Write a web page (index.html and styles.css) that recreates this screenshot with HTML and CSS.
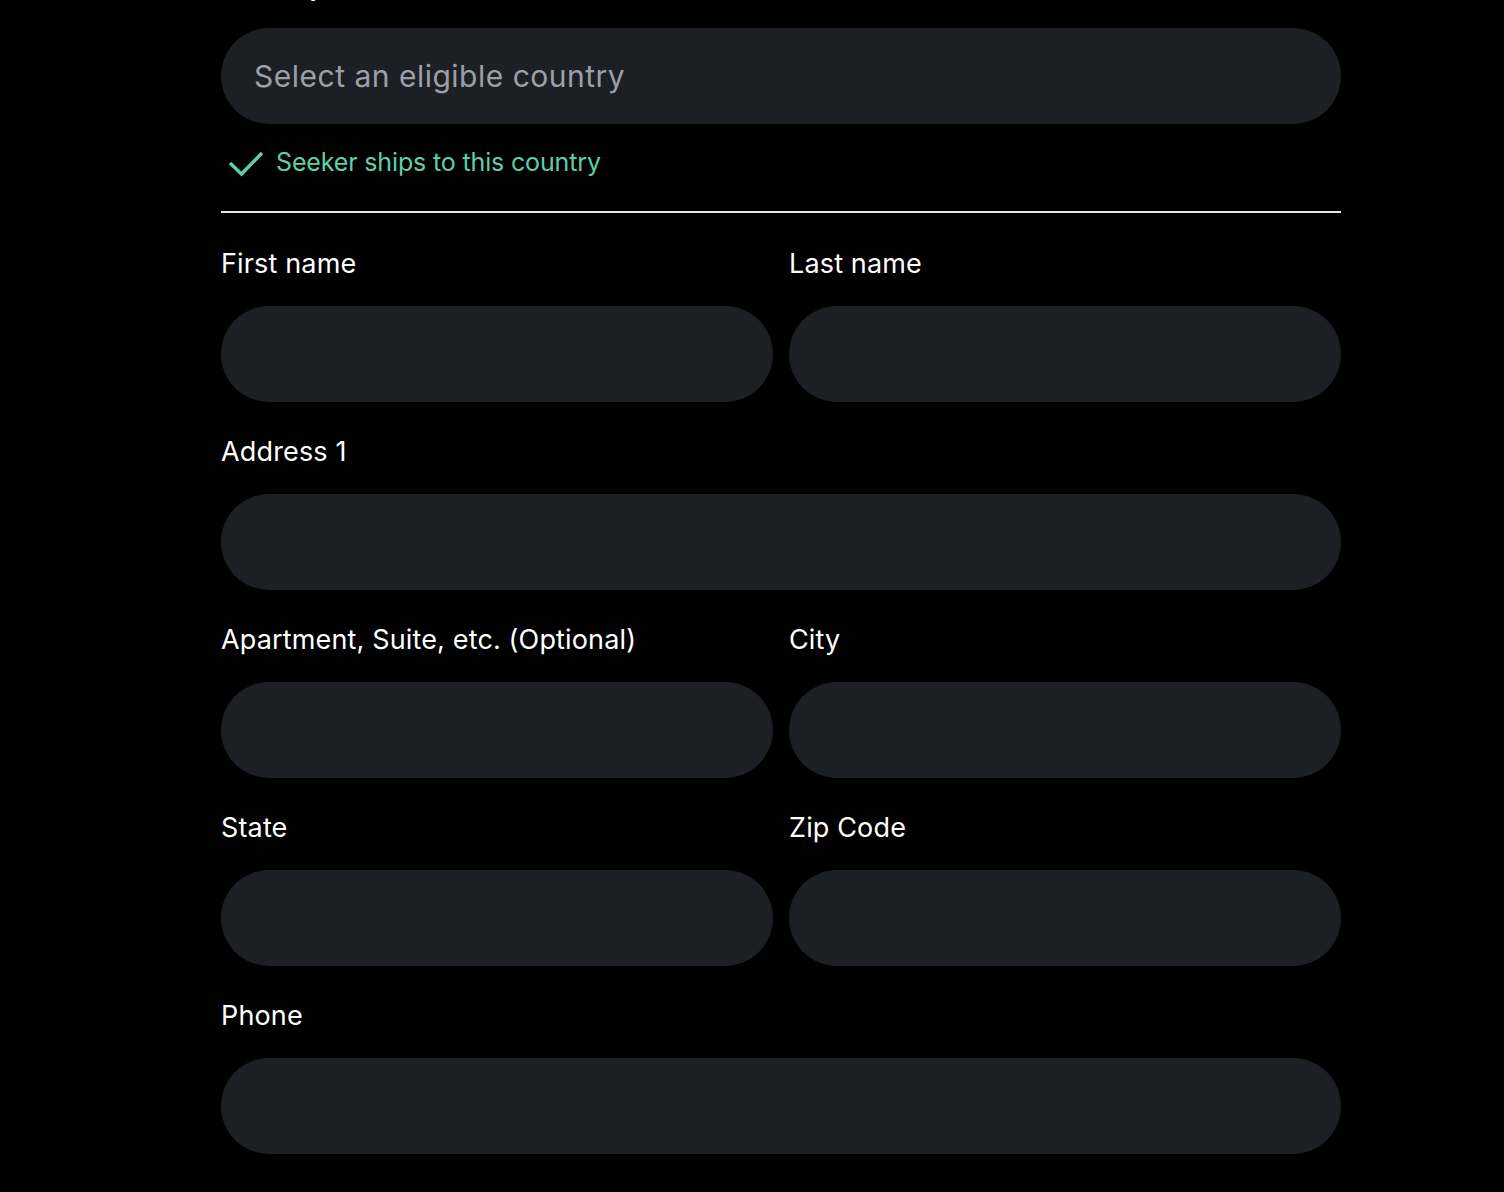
FILE: index.html
```html
<!DOCTYPE html>
<html lang="en">
<head>
<meta charset="utf-8">
<title>Shipping address</title>
<link rel="stylesheet" href="styles.css">
</head>
<body>
<form class="form">
  <div class="field">
    <label class="label">Country</label>
    <div class="input select"><span class="placeholder">Select an eligible country</span></div>
  </div>
  <div class="notice">
    <svg class="check" width="36" height="28" viewBox="0 0 36 28" aria-hidden="true">
      <path d="M2 14 L13.5 25 L34 4" fill="none" stroke="#5fcfa8" stroke-width="3.4" stroke-linecap="butt" stroke-linejoin="miter"/>
    </svg>
    <span class="notice-text">Seeker ships to this country</span>
  </div>
  <hr class="divider">
  <div class="grid">
    <div class="field">
      <label class="label">First name</label>
      <div class="input"></div>
    </div>
    <div class="field">
      <label class="label">Last name</label>
      <div class="input"></div>
    </div>
    <div class="field span">
      <label class="label">Address 1</label>
      <div class="input"></div>
    </div>
    <div class="field">
      <label class="label">Apartment, Suite, etc. (Optional)</label>
      <div class="input"></div>
    </div>
    <div class="field">
      <label class="label">City</label>
      <div class="input"></div>
    </div>
    <div class="field">
      <label class="label">State</label>
      <div class="input"></div>
    </div>
    <div class="field">
      <label class="label">Zip Code</label>
      <div class="input"></div>
    </div>
    <div class="field span">
      <label class="label">Phone</label>
      <div class="input"></div>
    </div>
  </div>
</form>
</body>
</html>
```
FILE: styles.css
```css
html, body {
  margin: 0;
  padding: 0;
  background: #000;
  height: 100%;
  overflow: hidden;
}
body {
  font-family: Inter, "Liberation Sans", sans-serif;
  color: #fff;
}
.form {
  width: 1120px;
  margin: -32px 0 0 221px;
  display: flex;
  flex-direction: column;
}
.field {
  display: flex;
  flex-direction: column;
}
.label {
  font-size: 27px;
  line-height: 36px;
  color: #fff;
  margin-bottom: 24px;
  letter-spacing: 0.15px;
}
.input {
  height: 96px;
  border-radius: 48px;
  background: #1c1f23;
  display: flex;
  align-items: center;
  padding: 0 33px;
}
.placeholder {
  font-size: 30px;
  color: #9ca0a6;
  letter-spacing: 0.5px;
}
.notice {
  margin-top: 24px;
  height: 28px;
  display: flex;
  align-items: center;
  gap: 12px;
  padding-left: 7px;
}
.check {
  flex: none;
  margin-top: 2px;
}
.notice-text {
  font-size: 25px;
  line-height: 28px;
  color: #5fcfa8;
  letter-spacing: -0.15px;
}
.divider {
  margin: 35px 0 0;
  border: 0;
  height: 2px;
  background: #e6e6ea;
}
.grid {
  margin-top: 33px;
  display: grid;
  grid-template-columns: 1fr 1fr;
  column-gap: 16px;
  row-gap: 32px;
}
.span {
  grid-column: 1 / -1;
}
```
